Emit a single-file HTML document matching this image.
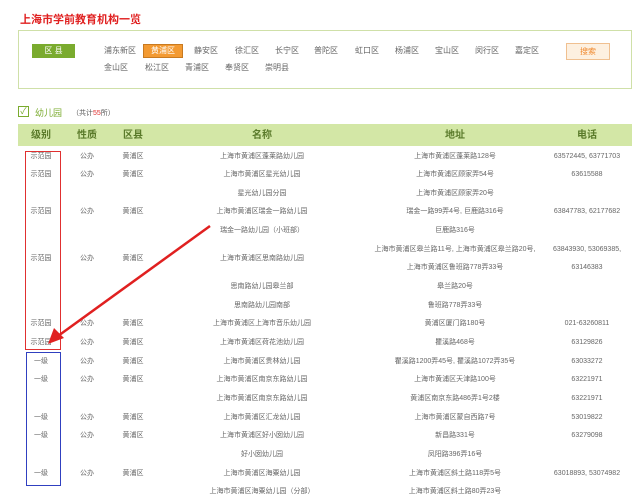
<!DOCTYPE html>
<html><head><meta charset="utf-8"><style>
body{margin:0;width:640px;height:495px;overflow:hidden;background:#fff;font-family:"Liberation Sans","Noto Sans CJK SC",sans-serif;position:relative}
.a{position:absolute;white-space:nowrap}
.t{color:#666;font-size:7px;transform:translateX(-50%);line-height:10px}
.d{color:#666;font-size:8px;line-height:10px}
.h{color:#5a7a2a;font-size:10px;font-weight:bold;transform:translateX(-50%);top:130px;line-height:12px}
</style></head><body>
<div class="a" style="left:20px;top:11px;color:#e02020;font-size:11px;font-weight:bold">上海市学前教育机构一览</div>
<div class="a" style="left:18px;top:30px;width:612px;height:57px;border:1px solid #cfe0a8"></div>
<div class="a" style="left:32px;top:44px;width:43px;height:14px;background:#7aab2e;color:#fff;font-size:8px;line-height:14px;text-align:center">区 县</div>
<div class="a" style="left:143px;top:44px;width:40px;height:14px;background:#f39a32;border:1px solid #c87a20;box-sizing:border-box;color:#fff;font-size:8px;line-height:12px;text-align:center">黄浦区</div>
<div class="a" style="left:566px;top:43px;width:44px;height:17px;background:#fdf0e0;border:1px solid #f0c090;box-sizing:border-box;color:#f08a30;font-size:8px;line-height:15px;text-align:center">搜索</div>
<div class="a d" style="left:104px;top:46px">浦东新区</div>
<div class="a d" style="left:194px;top:46px">静安区</div>
<div class="a d" style="left:235px;top:46px">徐汇区</div>
<div class="a d" style="left:275px;top:46px">长宁区</div>
<div class="a d" style="left:314px;top:46px">普陀区</div>
<div class="a d" style="left:355px;top:46px">虹口区</div>
<div class="a d" style="left:395px;top:46px">杨浦区</div>
<div class="a d" style="left:435px;top:46px">宝山区</div>
<div class="a d" style="left:475px;top:46px">闵行区</div>
<div class="a d" style="left:515px;top:46px">嘉定区</div>
<div class="a d" style="left:104px;top:63px">金山区</div>
<div class="a d" style="left:145px;top:63px">松江区</div>
<div class="a d" style="left:185px;top:63px">青浦区</div>
<div class="a d" style="left:225px;top:63px">奉贤区</div>
<div class="a d" style="left:265px;top:63px">崇明县</div>
<div class="a" style="left:18px;top:106px;width:9px;height:9px;border:1px solid #7aab2e;color:#7aab2e;font-size:9px;line-height:9px;text-align:center">✓</div>
<div class="a" style="left:35px;top:106px;color:#7aab2e;font-size:9px">幼儿园</div>
<div class="a" style="left:72px;top:108px;color:#555;font-size:7px">（共计<span style="color:#e03030">55</span>所）</div>
<div class="a" style="left:18px;top:124px;width:614px;height:22px;background:#d3e7a6"></div>
<div class="a h" style="left:41px">级别</div><div class="a h" style="left:87px">性质</div><div class="a h" style="left:133px">区县</div><div class="a h" style="left:262px">名称</div><div class="a h" style="left:455px">地址</div><div class="a h" style="left:587px">电话</div>
<div id="r"></div>
<script>
var R=[
[152,"示范园","公办","黄浦区","上海市黄浦区蓬莱路幼儿园","上海市黄浦区蓬莱路128号","63572445, 63771703"],
[170,"示范园","公办","黄浦区","上海市黄浦区星光幼儿园","上海市黄浦区顾家弄54号","63615588"],
[189,"","","","星光幼儿园分园","上海市黄浦区顾家弄20号",""],
[207,"示范园","公办","黄浦区","上海市黄浦区瑞金一路幼儿园","瑞金一路99弄4号, 巨鹿路316号","63847783, 62177682"],
[226,"","","","瑞金一路幼儿园（小班部）","巨鹿路316号",""],
[254,"示范园","公办","黄浦区","上海市黄浦区思南路幼儿园","",""],
[245,"","","","","上海市黄浦区皋兰路11号, 上海市黄浦区皋兰路20号,","63843930, 53069385,"],
[263,"","","","","上海市黄浦区鲁班路778弄33号","63146383"],
[282,"","","","思南路幼儿园皋兰部","皋兰路20号",""],
[301,"","","","思南路幼儿园南部","鲁班路778弄33号",""],
[319,"示范园","公办","黄浦区","上海市黄浦区上海市音乐幼儿园","黄浦区厦门路180号","021-63260811"],
[338,"示范园","公办","黄浦区","上海市黄浦区荷花池幼儿园","瞿溪路468号","63129826"],
[357,"一级","公办","黄浦区","上海市黄浦区贵林幼儿园","瞿溪路1200弄45号, 瞿溪路1072弄35号","63033272"],
[375,"一级","公办","黄浦区","上海市黄浦区南京东路幼儿园","上海市黄浦区天津路100号","63221971"],
[394,"","","","上海市黄浦区南京东路幼儿园","黄浦区南京东路486弄1号2楼","63221971"],
[413,"一级","公办","黄浦区","上海市黄浦区汇龙幼儿园","上海市黄浦区蒙自西路7号","53019822"],
[431,"一级","公办","黄浦区","上海市黄浦区好小囡幼儿园","新昌路331号","63279098"],
[450,"","","","好小囡幼儿园","凤阳路396弄16号",""],
[469,"一级","公办","黄浦区","上海市黄浦区海粟幼儿园","上海市黄浦区斜土路118弄5号","63018893, 53074982"],
[487,"","","","上海市黄浦区海粟幼儿园（分部）","上海市黄浦区斜土路80弄23号",""]];
var X=[41,87,133,262,455,587],h="";
R.forEach(function(r){for(var i=0;i<6;i++)if(r[i+1])h+='<div class="a t" style="left:'+X[i]+'px;top:'+r[0]+'px">'+r[i+1]+'</div>';});
document.getElementById("r").innerHTML=h;
</script>
<div class="a" style="left:25px;top:151px;width:34px;height:197px;border:1.5px solid #e03030"></div>
<div class="a" style="left:26px;top:352px;width:33px;height:132px;border:1.5px solid #3040c0"></div>
<svg class="a" style="left:0;top:0" width="640" height="495"><line x1="210" y1="226" x2="58" y2="336" stroke="#e02020" stroke-width="2.5"/><polygon points="48,344 54,328 64,338" fill="#e02020"/></svg>
</body></html>
